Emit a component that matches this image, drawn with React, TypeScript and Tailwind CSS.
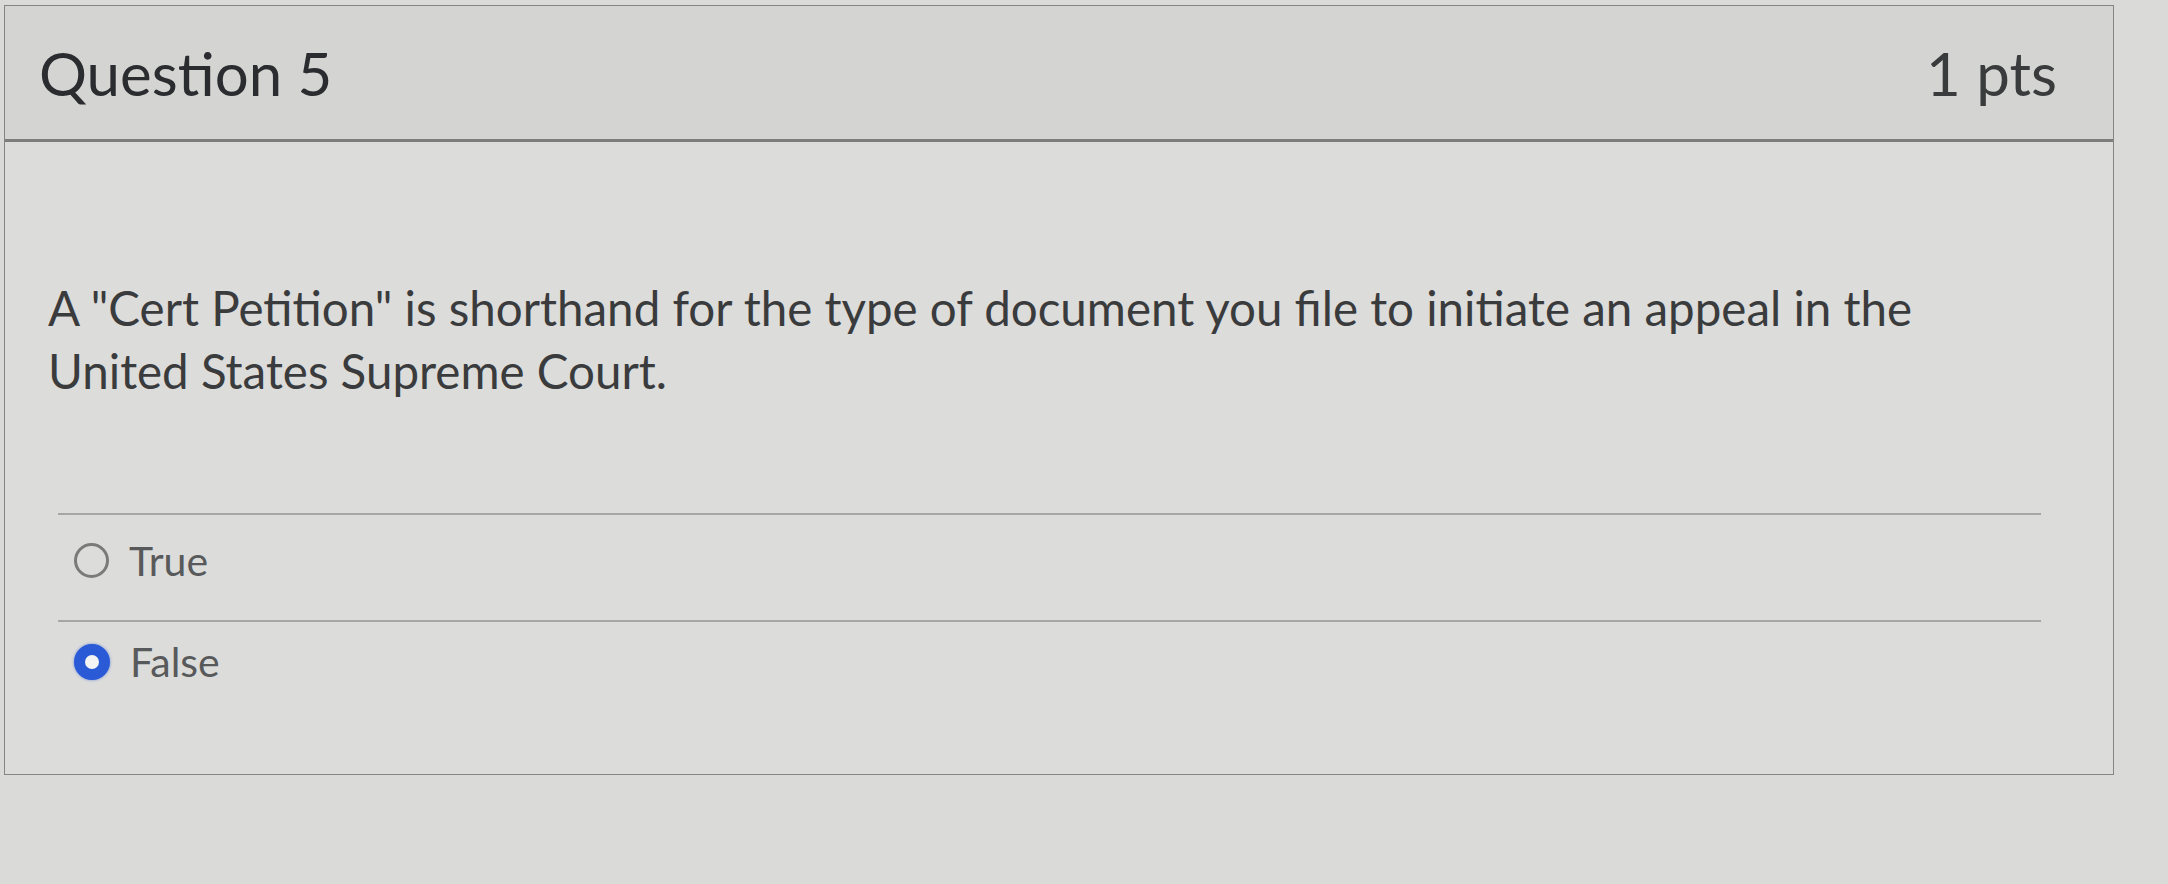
import React from "react";

function Radio({ checked }: { checked: boolean }) {
  return checked ? (
    <span className="block h-[36px] w-[36px] shrink-0 rounded-full border-[11px] border-[#2a5ad6] bg-[#f4f4f4] shadow-[0_0_3px_rgba(42,90,214,0.6)]" />
  ) : (
    <span className="block h-[35px] w-[35px] shrink-0 rounded-full border-[3px] border-[#7a7a7a] bg-transparent" />
  );
}

export default function App() {
  return (
    <div
      className="h-[884px] w-full overflow-hidden bg-[#dadad8] pl-[4px] pt-[5px]"
      style={{ fontFamily: "Lato, 'Open Sans', 'Noto Sans', sans-serif" }}
    >
      <div className="flex h-[770px] w-[2110px] flex-col border border-[#858585] bg-[#dcdcda]">
        <div className="flex h-[136px] items-center justify-between border-b-[3px] border-[#7d7d7d] bg-[#d4d4d2] pl-[34px] pr-[56px]">
          <h2 className="text-[60px] font-normal leading-none text-[#2b2c2f]">Question 5</h2>
          <div className="text-[60px] leading-none text-[#3a3b3d]">1 pts</div>
        </div>
        <div className="flex flex-col pl-[43px] pt-[134px]">
          <p className="text-[47.5px] leading-[63px] text-[#3a3b3d]">
            A "Cert Petition" is shorthand for the type of document you file to initiate an appeal in the
            <br />
            United States Supreme Court.
          </p>
          <div className="ml-[10px] mt-[111px] w-[1983px]">
            <div className="flex h-[107px] items-center gap-[20px] border-t-2 border-[#a6a6a4] pb-[14px] pl-[16px]">
              <Radio checked={false} />
              <span className="text-[41px] leading-none text-[#58595b]">True</span>
            </div>
            <div className="flex h-[95px] items-center gap-[20px] border-t-2 border-[#a6a6a4] pb-[14px] pl-[16px]">
              <Radio checked={true} />
              <span className="text-[41px] leading-none text-[#58595b]">False</span>
            </div>
          </div>
        </div>
      </div>
    </div>
  );
}
